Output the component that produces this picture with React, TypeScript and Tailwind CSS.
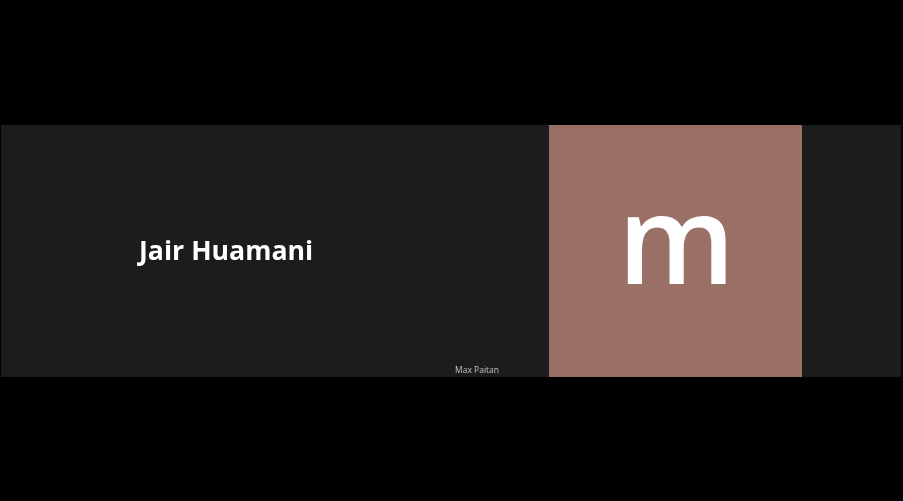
export default function App() {
  return (
    <div className="h-[501px] w-[903px] overflow-hidden bg-black pl-px pr-[2px] pt-[125px] font-['Open_Sans',sans-serif]">
      <div className="flex h-[252px] bg-[#1c1c1c]">
        {/* Left participant */}
        <div className="relative flex w-[548px] items-center pb-[2px] pl-[138px]">
          <span className="text-[26.7px] font-bold leading-none text-white blur-[0.4px]">Jair Huamani</span>
          <span className="absolute bottom-[3px] right-[50px] text-[8.5px] leading-none text-[#c4c4c4] blur-[0.4px]">Max Paitan</span>
        </div>

        {/* Avatar tile */}
        <div className="flex w-[253px] items-center justify-center bg-[#9a6f65] pb-[29px] pl-[2px]">
          <span className="text-[123px] font-semibold leading-none text-white blur-[0.4px]">m</span>
        </div>
      </div>
    </div>
  );
}
